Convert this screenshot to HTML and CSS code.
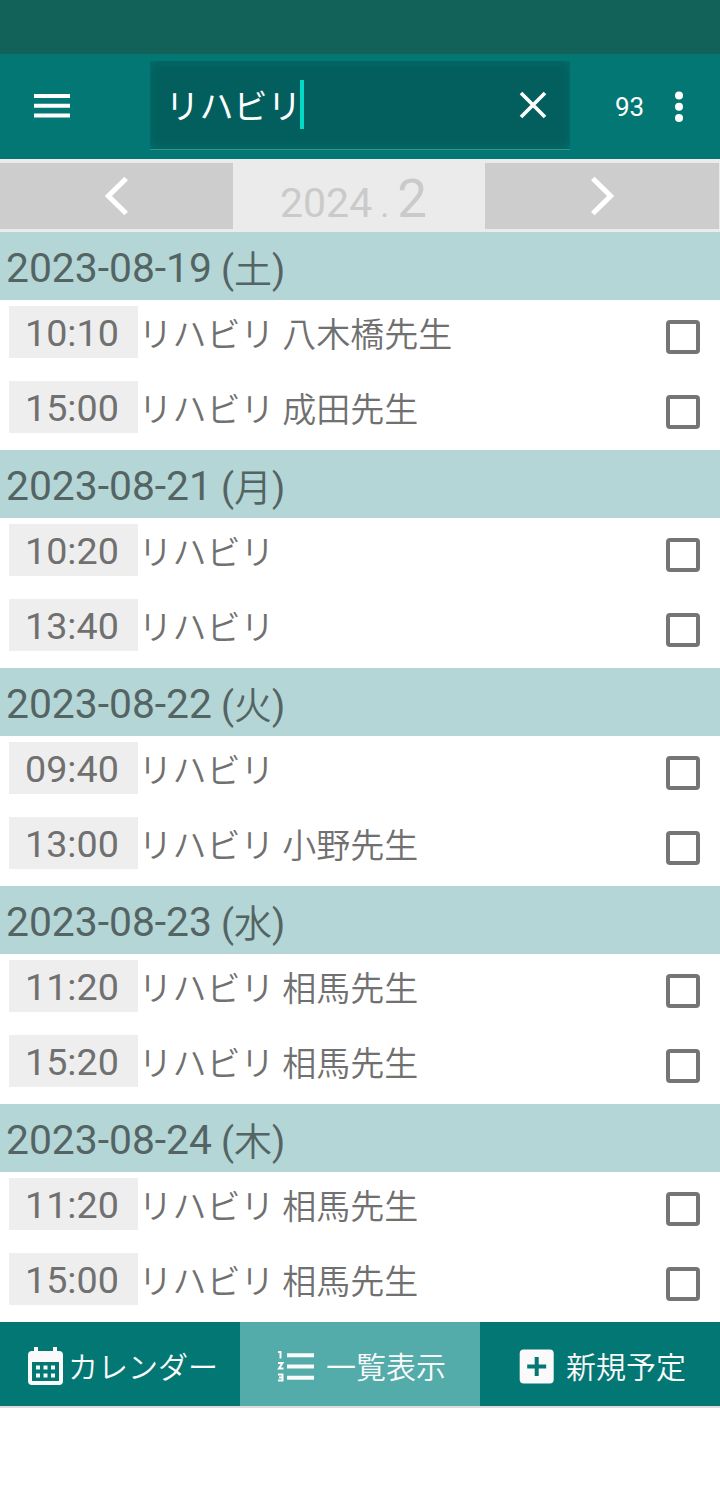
FILE: index.html
```
<!doctype html>
<html lang="ja">
  <head>
    <meta charset="UTF-8" />
    <meta name="viewport" content="width=device-width, initial-scale=1.0" />
    <title>予定一覧</title>
    <link rel="stylesheet" href="styles.css">
  </head>
  <body>
    <div class="status-bar"></div>

    <header class="toolbar">
      <svg class="menu-icon" width="36" height="26" viewBox="0 0 36 26" fill="#fff">
        <path d="M0 1h36v4H0zM0 10.8h36v4H0zM0 20.5h36v4H0z" />
      </svg>
      <div class="search-box">
        <span class="search-text">リハビリ</span>
        <span class="caret"></span>
        <svg class="clear-icon" width="28" height="28" viewBox="0 0 28 28" fill="none" stroke="#fff" stroke-width="3.6">
          <path d="M2 2l24 24M26 2L2 26" />
        </svg>
      </div>
      <span class="count">93</span>
      <svg class="more-icon" width="8" height="32" viewBox="0 0 8 32" fill="#fff">
        <circle cx="4" cy="4.5" r="4" />
        <circle cx="4" cy="15.7" r="4" />
        <circle cx="4" cy="27" r="4" />
      </svg>
    </header>

    <nav class="month-bar">
      <div class="month-btn">
        <svg width="24" height="38" viewBox="0 0 24 38" fill="none" stroke="#fff" stroke-width="5">
          <path d="M21.2 1.5L3.4 19l17.8 17.5" />
        </svg>
      </div>
      <div class="month-label">
        <span class="year">2024</span><span class="dot">.</span><span class="month">2</span>
      </div>
      <div class="month-btn">
        <svg width="24" height="38" viewBox="0 0 24 38" fill="none" stroke="#fff" stroke-width="5">
          <path d="M2.8 1.5L20.6 19L2.8 36.5" />
        </svg>
      </div>
    </nav>

    <main class="schedule">
      <section class="day">
        <h2 class="day-header">2023-08-19 <span class="weekday">(<span class="kanji">土</span>)</span></h2>
        <div class="event">
          <span class="time">10:10</span>
          <span class="title">リハビリ 八木橋先生</span>
          <span class="checkbox"></span>
        </div>
        <div class="event">
          <span class="time">15:00</span>
          <span class="title">リハビリ 成田先生</span>
          <span class="checkbox"></span>
        </div>
      </section>

      <section class="day">
        <h2 class="day-header">2023-08-21 <span class="weekday">(<span class="kanji">月</span>)</span></h2>
        <div class="event">
          <span class="time">10:20</span>
          <span class="title">リハビリ</span>
          <span class="checkbox"></span>
        </div>
        <div class="event">
          <span class="time">13:40</span>
          <span class="title">リハビリ</span>
          <span class="checkbox"></span>
        </div>
      </section>

      <section class="day">
        <h2 class="day-header">2023-08-22 <span class="weekday">(<span class="kanji">火</span>)</span></h2>
        <div class="event">
          <span class="time">09:40</span>
          <span class="title">リハビリ</span>
          <span class="checkbox"></span>
        </div>
        <div class="event">
          <span class="time">13:00</span>
          <span class="title">リハビリ 小野先生</span>
          <span class="checkbox"></span>
        </div>
      </section>

      <section class="day">
        <h2 class="day-header">2023-08-23 <span class="weekday">(<span class="kanji">水</span>)</span></h2>
        <div class="event">
          <span class="time">11:20</span>
          <span class="title">リハビリ 相馬先生</span>
          <span class="checkbox"></span>
        </div>
        <div class="event">
          <span class="time">15:20</span>
          <span class="title">リハビリ 相馬先生</span>
          <span class="checkbox"></span>
        </div>
      </section>

      <section class="day">
        <h2 class="day-header">2023-08-24 <span class="weekday">(<span class="kanji">木</span>)</span></h2>
        <div class="event">
          <span class="time">11:20</span>
          <span class="title">リハビリ 相馬先生</span>
          <span class="checkbox"></span>
        </div>
        <div class="event">
          <span class="time">15:00</span>
          <span class="title">リハビリ 相馬先生</span>
          <span class="checkbox"></span>
        </div>
      </section>
    </main>

    <footer class="tab-bar">
      <div class="tab tab-calendar">
        <svg width="36" height="40" viewBox="0 0 36 40">
          <path fill="#fafafa" d="M6 1h4v4h15V1h4v4h2a4 4 0 0 1 4 4v26a4 4 0 0 1-4 4H4a4 4 0 0 1-4-4V9a4 4 0 0 1 4-4h2z" />
          <path fill="#037774" d="M4 16h27v19H4z" />
          <path fill="#fafafa" d="M8 19.5h4v4H8zM15.5 19.5h4v4h-4zM23 19.5h4v4h-4zM8 27.5h4v4H8zM15.5 27.5h4v4h-4zM23 27.5h4v4h-4z" />
        </svg>
        <span>カレンダー</span>
      </div>
      <div class="tab tab-list active">
        <svg width="38" height="32" viewBox="0 0 38 32" fill="none" stroke="#fafafa" stroke-width="2">
          <path fill="#fafafa" stroke="none" d="M10 3.3h27v4H10zM10 14.5h27v4H10zM10 25.7h27v4H10z" />
          <path d="M1 2h2.5v6.5M1 13h4.5L2 18.5h4.5M1 24.5h4.5v6H1M2 27.5h3.5" />
        </svg>
        <span>一覧表示</span>
      </div>
      <div class="tab tab-new">
        <svg width="35" height="35" viewBox="0 0 35 35">
          <rect x="0.7" y="0.5" width="34" height="34" rx="4" fill="#fafafa" />
          <path fill="#037774" d="M15.7 8h4v7.5h7.5v4h-7.5V27h-4v-7.5H8.2v-4h7.5z" />
        </svg>
        <span>新規予定</span>
      </div>
    </footer>
  </body>
</html>
```
FILE: styles.css
```
* {
  box-sizing: border-box;
  margin: 0;
  padding: 0;
}

body {
  background-color: #fff;
  font-family: Roboto, "Noto Sans CJK JP", sans-serif;
  color: #707070;
}

svg {
  display: block;
  flex-shrink: 0;
}

.status-bar {
  height: 54px;
  background-color: #12625a;
}

/* Toolbar */
.toolbar {
  display: flex;
  align-items: center;
  height: 105px;
  padding: 0 37.5px 1px 34px;
  background-color: #037774;
  color: #fff;
}

.menu-icon {
  margin-right: 80px;
}

.search-box {
  display: flex;
  align-items: center;
  width: 420px;
  height: 89px;
  margin-bottom: 1px;
  padding: 0 23.5px 0 15.5px;
  background-color: #035f5d;
  border-bottom: 1px solid #3e908e;
  box-shadow: inset 0 0 8px 1px #046f6c;
}

.search-text {
  width: 134.5px;
  padding-top: 3px;
  font-size: 34px;
  line-height: 50px;
  white-space: nowrap;
}

.caret {
  width: 4px;
  height: 49px;
  margin-bottom: 1px;
  background-color: #03dac5;
}

.clear-icon {
  margin-left: auto;
}

.count {
  margin-left: 45px;
  font-size: 26px;
  line-height: 30px;
  padding-top: 1px;
}

.more-icon {
  margin-left: auto;
  margin-top: 1px;
}

/* Month switcher */
.month-bar {
  display: grid;
  grid-template-columns: 233px 252px 234px;
  grid-template-rows: 66px;
  height: 73px;
  padding: 4px 0 3px;
  background-color: #ebebeb;
}

.month-btn {
  display: flex;
  justify-content: center;
  align-items: center;
  background-color: #cdcdcd;
}

.month-label {
  padding-left: 47px;
  color: #cacaca;
  line-height: 72px;
  white-space: nowrap;
}

.year {
  font-size: 41px;
}

.dot {
  margin: 0 8px 0 8px;
  font-size: 34px;
}

.month {
  font-size: 53px;
}

/* Day sections */
.day {
  height: 218px;
}

.day-header {
  display: flex;
  gap: 9px;
  height: 68px;
  padding-left: 6px;
  background-color: #b4d6d6;
  color: #546463;
  font-size: 40.8px;
  font-weight: 400;
  line-height: 72px;
}

.weekday {
  font-size: 38px;
  line-height: 76px;
}

.kanji {
  font-weight: 350;
}

.event {
  display: flex;
  align-items: flex-start;
  height: 75px;
  padding: 6px 20px 0 9px;
}

.time {
  width: 129px;
  height: 52px;
  padding-left: 16px;
  background-color: #eee;
  font-size: 37.7px;
  line-height: 55px;
}

.title {
  flex: 1;
  padding-left: 0.5px;
  color: #707070;
  font-size: 34px;
  font-weight: 350;
  line-height: 58px;
  word-spacing: -0.5px;
}

.checkbox {
  width: 34px;
  height: 34px;
  margin-top: 14px;
  border: 4px solid #757575;
  border-radius: 4px;
}

/* Bottom tabs */
.tab-bar {
  display: grid;
  grid-template-columns: repeat(3, 240px);
  height: 86px;
  border-bottom: 2px solid #ddd;
}

.tab {
  display: flex;
  align-items: center;
  padding-top: 4px;
  background-color: #037774;
  color: #fafafa;
  font-size: 30px;
}

.tab span {
  margin-bottom: 2px;
  font-weight: 350;
}

.tab.active {
  background-color: #53abaa;
}

.tab-calendar {
  gap: 4px;
  padding-left: 28px;
}

.tab-list {
  gap: 11px;
  padding-left: 37px;
}

.tab-new {
  gap: 12px;
  padding-left: 39px;
}
```
